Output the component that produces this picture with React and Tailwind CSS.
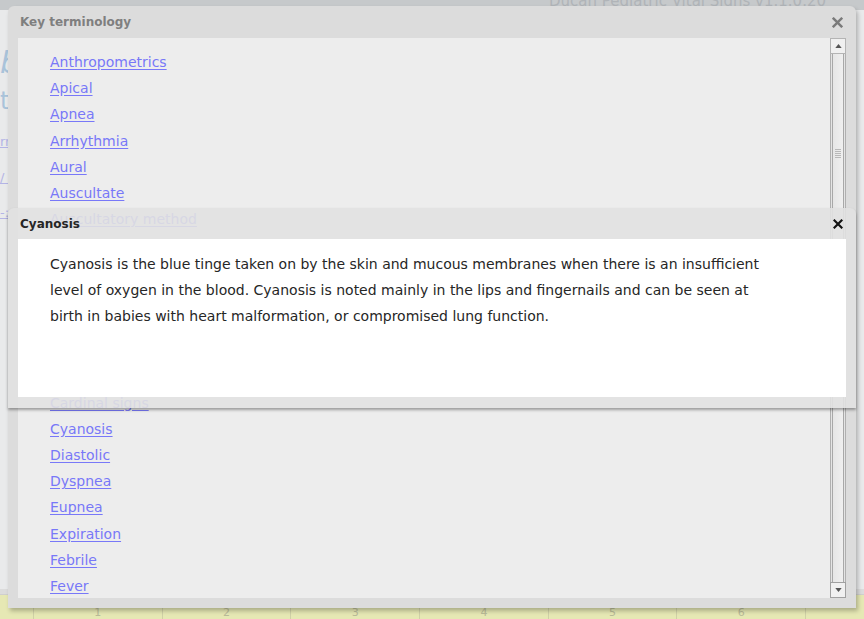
import { Fragment } from "react";

const TERMS = [
  "Anthropometrics",
  "Apical",
  "Apnea",
  "Arrhythmia",
  "Aural",
  "Auscultate",
  "Auscultatory method",
  "Axillary",
  "Blood pressure",
  "Bradycardia",
  "Bradypnea",
  "Brachial pulse",
  "Capillary refill",
  "Cardinal signs",
  "Cyanosis",
  "Diastolic",
  "Dyspnea",
  "Eupnea",
  "Expiration",
  "Febrile",
  "Fever",
  "Hyperthermia",
];

const COLUMNS = ["1", "2", "3", "4", "5", "6", ""];

function CloseIcon({ className }) {
  return (
    <svg viewBox="0 0 10 10" className={className} fill="none" stroke="currentColor" strokeWidth="2.2" strokeLinecap="square">
      <path d="M1.5 1.5 8.5 8.5M8.5 1.5 1.5 8.5" />
    </svg>
  );
}

function Arrow({ up }) {
  return (
    <svg viewBox="0 0 8 5" className="h-[4px] w-[7px] text-[#555]">
      <path d={up ? "M0 5 4 0 8 5z" : "M0 0 4 5 8 0z"} fill="currentColor" />
    </svg>
  );
}

function Scrollbar() {
  return (
    <div className="flex w-[16px] flex-col">
      <div className="flex h-[16px] items-center justify-center border border-[#b4b4b4] bg-[#f0f0f0]">
        <Arrow up />
      </div>
      <div className="flex flex-1 flex-col border-x border-[#b0b0b0] bg-[#e4e4e4] px-[1px]">
        <div className="flex flex-1 flex-col border-x border-[#a8a8a8] bg-gradient-to-r from-[#e6e6e6] to-[#efefef]">
          <div className="mt-[95px] flex flex-col items-center gap-[1px]">
            {[0, 1, 2, 3, 4].map((i) => (
              <div key={i} className="h-[1px] w-[6px] bg-[#b8b8b8]" />
            ))}
          </div>
        </div>
      </div>
      <div className="flex h-[16px] items-center justify-center border border-[#a0a0a0] bg-[#f0f0f0]">
        <Arrow />
      </div>
    </div>
  );
}

export default function App() {
  return (
    <div
      className="relative h-[619px] w-[864px] overflow-hidden bg-[#e9eaeb]"
      style={{ fontFamily: '"DejaVu Sans", Verdana, sans-serif' }}
    >
      {/* page behind the dialogs */}
      <div className="flex h-full flex-col">
        <div className="flex h-[10px] justify-end overflow-hidden bg-[#c6c9cb] pr-[38px]">
          <span className="-mt-[10px] text-[15px] text-[#b0b4b8]">Ducan Pediatric Vital Signs v1.1.0.20</span>
        </div>
        <div className="flex flex-1 flex-col pt-[36px] text-[#a9c3da]">
          <div className="text-[30px] italic leading-[34px]">bbb</div>
          <div className="mt-[8px] text-[24px] leading-[26px]">ttt</div>
          <div className="mt-[18px] flex flex-col gap-[16px] text-[13px] text-[#b4b4e6] underline">
            <span>rr</span>
            <span>/ i</span>
            <span>-:</span>
          </div>
        </div>
        <div className="h-[6px] border-b border-[#cfcfcf] bg-[#dcdcdc]" />
        <div className="flex h-[24px] bg-[#e6e8b4] pl-[33px] text-[11px] text-[#b9bb98]">
          {COLUMNS.map((c, i) => (
            <div key={i} className="flex w-[128.7px] shrink-0 justify-center border-l border-[#cfd0a6] pt-[10px]">
              {c}
            </div>
          ))}
        </div>
      </div>

      {/* Key terminology dialog */}
      <div className="absolute left-[8px] top-[6px] flex h-[602px] w-[848px] flex-col rounded-t-[6px] bg-[#dcdcdc] shadow-[2px_3px_4px_rgba(0,0,0,0.25)]">
        <div className="flex h-[32px] items-center justify-between pl-[12px] pr-[13px]">
          <span className="text-[12px] font-bold text-[#7f7f7f]">Key terminology</span>
          <CloseIcon className="h-[11px] w-[11px] text-[#7a7a7a]" />
        </div>
        <div className="mx-[10px] mb-[10px] flex min-h-0 flex-1 bg-[#ededed]">
          <div className="flex min-w-0 flex-1 flex-col overflow-hidden pl-[32px] pt-[11px]">
            {TERMS.map((t) => (
              <a key={t} className="w-fit text-[14px] leading-[26.2px] text-[#7878f8] underline underline-offset-2">
                {t}
              </a>
            ))}
          </div>
          <Scrollbar />
        </div>
      </div>

      {/* Cyanosis dialog */}
      <div className="absolute left-[8px] top-[208px] flex h-[200px] w-[848px] flex-col rounded-t-[6px] bg-[#e1e1e1]/90 shadow-[0_2px_3px_rgba(0,0,0,0.35)]">
        <div className="flex h-[31px] items-center justify-between pl-[12px] pr-[13px]">
          <span className="text-[12px] font-bold text-[#262626]">Cyanosis</span>
          <CloseIcon className="h-[10px] w-[10px] text-[#111]" />
        </div>
        <div className="mx-[10px] mb-[11px] flex-1 bg-white pl-[32px] pt-[12px]">
          <p className="max-w-[728px] text-[14px] leading-[26px] text-[#262626]">
            Cyanosis is the blue tinge taken on by the skin and mucous membranes when there is an insufficient level of
            oxygen in the blood. Cyanosis is noted mainly in the lips and fingernails and can be seen at birth in babies
            with heart malformation, or compromised lung function.
          </p>
        </div>
      </div>
    </div>
  );
}
